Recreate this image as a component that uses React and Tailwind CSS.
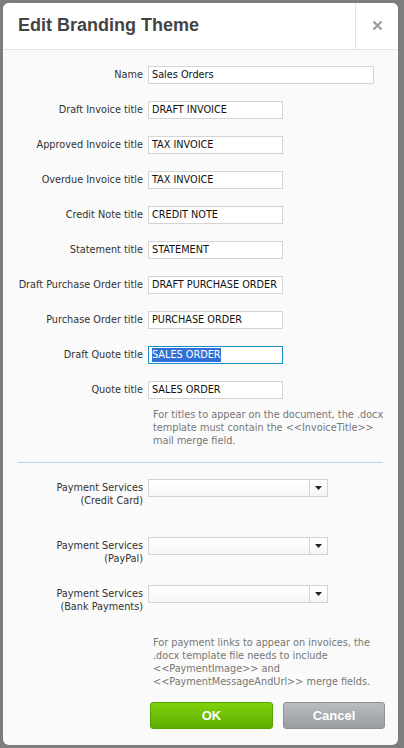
const font = { fontFamily: '"DejaVu Sans Condensed", "DejaVu Sans", sans-serif' };

const titleRows = [
  { label: 'Name', value: 'Sales Orders', wide: true },
  { label: 'Draft Invoice title', value: 'DRAFT INVOICE' },
  { label: 'Approved Invoice title', value: 'TAX INVOICE' },
  { label: 'Overdue Invoice title', value: 'TAX INVOICE' },
  { label: 'Credit Note title', value: 'CREDIT NOTE' },
  { label: 'Statement title', value: 'STATEMENT' },
  { label: 'Draft Purchase Order title', value: 'DRAFT PURCHASE ORDER' },
  { label: 'Purchase Order title', value: 'PURCHASE ORDER' },
  { label: 'Draft Quote title', value: 'SALES ORDER', selected: true },
  { label: 'Quote title', value: 'SALES ORDER' },
];

const payments = [
  { label: '(Credit Card)', mt: 'mt-[16px]' },
  { label: '(PayPal)', mt: 'mt-[30px]' },
  { label: '(Bank Payments)', mt: 'mt-[20px]' },
];

function TextField({ value, wide, selected }) {
  return (
    <div
      className={`h-[18px] flex items-center pl-[3px] bg-white text-[10.8px] text-[#111] whitespace-nowrap overflow-hidden border ${
        wide ? 'w-[226px]' : 'w-[135px]'
      } ${selected ? 'border-[#1b8ec4]' : 'border-[#d4d4d4]'}`}
    >
      {selected ? <span className="bg-[#3170d6] text-white leading-[14px]">{value}</span> : value}
    </div>
  );
}

function SelectField() {
  return (
    <div className="w-[180px] h-[18px] flex border border-[#d4d4d4] bg-gradient-to-b from-white to-[#f6f6f6]">
      <div className="flex-1" />
      <div className="w-[18px] border-l border-[#d4d4d4] flex items-center justify-center">
        <svg width="7" height="4" viewBox="0 0 7 4">
          <path d="M0 0h7L3.5 4z" fill="#222" />
        </svg>
      </div>
    </div>
  );
}

export default function App() {
  return (
    <div className="w-[404px] h-[748px] bg-[#7d7d7d] pt-[3px] pl-[3px]" style={font}>
      <div className="w-[395px] h-[742px] rounded-[6px] overflow-hidden bg-[#fafafa] flex flex-col">
        {/* header */}
        <div className="h-[47px] shrink-0 bg-white border-b border-[#e3e3e3] flex">
          <div
            className="flex-1 pl-[15px] flex items-center text-[18px] font-bold text-[#444] pb-[2px]"
            style={{ fontFamily: '"Liberation Sans", Arial, sans-serif' }}
          >
            Edit Branding Theme
          </div>
          <div className="w-[43px] border-l border-[#e3e3e3] flex items-center justify-center pb-[2px]">
            <svg width="11" height="11" viewBox="0 0 11 11">
              <path d="M1.5 1.5l8 8M9.5 1.5l-8 8" stroke="#9b9b9b" strokeWidth="2.2" />
            </svg>
          </div>
        </div>

        {/* body */}
        <div className="pt-[16px] flex flex-col">
          <div className="flex flex-col gap-[17px]">
            {titleRows.map((r) => (
              <div key={r.label} className="flex items-center h-[18px]">
                <div className="w-[140px] text-right text-[10.8px] text-[#333] whitespace-nowrap">{r.label}</div>
                <div className="ml-[5px]">
                  <TextField value={r.value} wide={r.wide} selected={r.selected} />
                </div>
              </div>
            ))}
          </div>

          <div className="ml-[150px] mt-[9px] text-[10.8px] leading-[13px] text-[#777] whitespace-nowrap">
            For titles to appear on the document, the .docx
            <br />
            template must contain the &lt;&lt;InvoiceTitle&gt;&gt;
            <br />
            mail merge field.
          </div>

          <div className="mx-[15px] mt-[15px] border-t border-[#b6d3f2]" />

          {payments.map((p) => (
            <div key={p.label} className={`flex items-start ${p.mt}`}>
              <div className="w-[140px] pt-[2px] text-right text-[10.8px] leading-[13px] text-[#333] whitespace-nowrap">
                Payment Services
                <br />
                {p.label}
              </div>
              <div className="ml-[5px]">
                <SelectField />
              </div>
            </div>
          ))}

          <div className="ml-[150px] mt-[23px] text-[10.8px] leading-[13px] text-[#777] whitespace-nowrap">
            For payment links to appear on invoices, the
            <br />
            .docx template file needs to include
            <br />
            &lt;&lt;PaymentImage&gt;&gt; and
            <br />
            &lt;&lt;PaymentMessageAndUrl&gt;&gt; merge fields.
          </div>

          <div className="mt-[14px] ml-[147px] flex gap-[10px]" style={{ fontFamily: '"Liberation Sans", Arial, sans-serif' }}>
            <button className="w-[123px] h-[27px] rounded-[3px] border border-[#55a300] bg-gradient-to-b from-[#80d20b] to-[#5cad00] text-white text-[13px] font-bold">
              OK
            </button>
            <button className="w-[102px] h-[27px] rounded-[3px] border border-[#8e9195] bg-gradient-to-b from-[#b9bcbf] to-[#9a9da1] text-white text-[13px] font-bold">
              Cancel
            </button>
          </div>
        </div>
      </div>
    </div>
  );
}
